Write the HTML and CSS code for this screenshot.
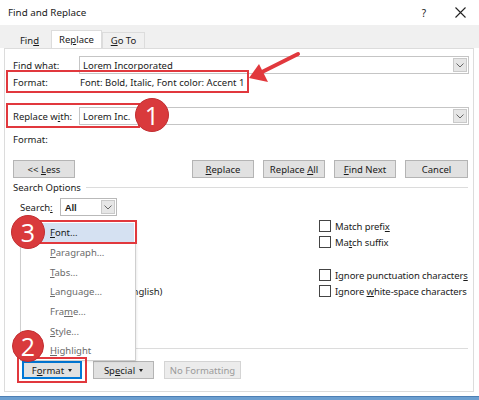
FILE: index.html
```html
<!DOCTYPE html>
<html>
<head>
<meta charset="utf-8">
<link rel="stylesheet" href="styles.css">
</head>
<body>
<div class="dialog">
  <div class="titlebar">
    <span class="title">Find and Replace</span>
    <span class="help">?</span>
    <svg class="close" width="11" height="11" viewBox="0 0 11 11"><path d="M0.5 0.5L10.5 10.5M10.5 0.5L0.5 10.5" stroke="#222" stroke-width="1.1"/></svg>
  </div>
  <div class="tabs">
    <span class="tab"><span>Fin<u>d</u></span></span>
    <span class="tab active"><span>Re<u>p</u>lace</span></span>
    <span class="tab"><span><u>G</u>o To</span></span>
  </div>
  <div class="panel">
    <div class="row r-find">
      <span class="label">Fi<u>n</u>d what:</span>
      <div class="combo"><span class="combo-text">Lorem Incorporated</span><span class="drop"><svg width="8" height="5" viewBox="0 0 8 5"><path d="M0.5 0.5L4 4L7.5 0.5" fill="none" stroke="#666" stroke-width="1"/></svg></span></div>
    </div>
    <div class="row r-fmt">
      <span class="label">Format:</span>
      <span class="fmt-text">Font: Bold, Italic, Font color: Accent 1</span>
    </div>
    <div class="row r-repl">
      <span class="label">Replace w<u>i</u>th:</span>
      <div class="combo"><span class="combo-text">Lorem Inc.</span><span class="drop"><svg width="8" height="5" viewBox="0 0 8 5"><path d="M0.5 0.5L4 4L7.5 0.5" fill="none" stroke="#666" stroke-width="1"/></svg></span></div>
    </div>
    <div class="row r-fmt2">
      <span class="label">Format:</span>
    </div>
    <div class="btn-row">
      <span class="btn"><span>&lt;&lt; <u>L</u>ess</span></span>
      <div class="btn-group">
        <span class="btn"><span><u>R</u>eplace</span></span>
        <span class="btn"><span>Replace <u>A</u>ll</span></span>
        <span class="btn"><span><u>F</u>ind Next</span></span>
        <span class="btn"><span>Cancel</span></span>
      </div>
    </div>
    <div class="group-title"><span>Search Options</span><span class="rule"></span></div>
    <div class="search-row">
      <span class="search-label">Search<u>:</u></span>
      <div class="select"><span class="combo-text">All</span><span class="drop"><svg width="8" height="5" viewBox="0 0 8 5"><path d="M0.5 0.5L4 4L7.5 0.5" fill="none" stroke="#666" stroke-width="1"/></svg></span></div>
    </div>
    <div class="options">
      <div class="col left">
        <label class="opt covered"><span class="box"></span><span>Matc<u>h</u> case</span></label>
        <label class="opt covered"><span class="box"></span><span>Find wh<u>o</u>le words only</span></label>
        <label class="opt covered"><span class="box"></span><span>Use wildcards</span></label>
        <label class="opt covered"><span class="box"></span><span>Sounds li<u>k</u>e (English)</span></label>
        <label class="opt"><span class="box"></span><span>Find all <u>w</u>ord forms (English)</span></label>
      </div>
      <div class="col right">
        <label class="opt"><span class="box"></span><span>Match prefi<u>x</u></span></label>
        <label class="opt"><span class="box"></span><span>Ma<u>t</u>ch suffix</span></label>
        <span class="opt"></span>
        <label class="opt"><span class="box"></span><span>Ignore punctuation character<u>s</u></span></label>
        <label class="opt"><span class="box"></span><span>Ignore <u>w</u>hite-space characters</span></label>
      </div>
    </div>
    <div class="group-title g-replace"><span class="covered">Replace</span><span class="rule"></span></div>
    <div class="bottom-row">
      <span class="btn fmt-btn"><span>F<u>o</u>rmat</span><i class="caret"></i></span>
      <span class="btn sp-btn"><span>Sp<u>e</u>cial</span><i class="caret"></i></span>
      <span class="btn disabled"><span>No Formatting</span></span>
    </div>
  </div>
  <div class="taskbar"></div>

  <div class="menu">
    <div class="item hl"><span><u>F</u>ont...</span></div>
    <div class="item"><span><u>P</u>aragraph...</span></div>
    <div class="item"><span><u>T</u>abs...</span></div>
    <div class="item"><span><u>L</u>anguage...</span></div>
    <div class="item"><span>Fra<u>m</u>e...</span></div>
    <div class="item"><span><u>S</u>tyle...</span></div>
    <div class="item"><span><u>H</u>ighlight</span></div>
  </div>

  <div class="redbox rb-fmt"></div>
  <div class="redbox rb-repl"></div>
  <div class="redbox rb-font"></div>
  <div class="redbox rb-fbtn"></div>

  <svg class="arrow" width="479" height="100" viewBox="0 0 479 100">
    <line x1="298" y1="54" x2="262" y2="72" stroke="#e1383d" stroke-width="4" stroke-linecap="round"/>
    <polygon points="249,78 259,64 268,82" fill="#e1383d"/>
  </svg>

  <div class="badge b1">1</div>
  <div class="badge b3">3</div>
  <div class="badge b2">2</div>
</div>
</body>
</html>
```

FILE: styles.css
```css
* { box-sizing: border-box; }
body {
  margin: 0;
  font-family: "Noto Sans", "Open Sans", sans-serif;
  font-size: 9.5px;
  color: #1a1a1a;
  background: #fff;
}
u { text-decoration: underline; text-underline-offset: 1px; }
.dialog {
  position: relative;
  width: 479px;
  height: 400px;
  overflow: hidden;
  background: #fff;
}
.titlebar {
  height: 25px;
  display: flex;
  align-items: center;
  padding: 0 13px 0 8px;
  font-size: 9.8px;
}
.title { flex: 1; }
.help { margin-right: 29px; font-size: 10px; }
.close { display: block; }
.tabs {
  height: 23px;
  background: #f0f0f0;
  display: flex;
  align-items: flex-end;
  padding-left: 8px;
}
.tab {
  height: 16px;
  width: 43px;
  display: flex;
  align-items: center;
  justify-content: center;
  border: 1px solid #dcdcdc;
  border-bottom: none;
  background: #f0f0f0;
}
.tab:first-child { border-color: transparent; }
.tab.active {
  width: 51px;
  height: 18px;
  background: #fff;
  border-color: #dcdcdc;
}
.panel {
  margin: 0 5px 0 4px;
  height: 344px;
  border: 1px solid #dcdcdc;
  padding: 7px 4px 0 8px;
}
.row { display: flex; align-items: center; }
.label { width: 66px; flex: none; }
.r-find, .r-repl { height: 18px; }
.r-fmt { height: 17px; }
.fmt-text { padding-left: 1px; }
.r-repl { margin-top: 16px; }
.r-fmt2 { height: 17px; margin-top: 6px; }
.combo {
  flex: 1;
  height: 18px;
  border: 1px solid #c5c5c5;
  display: flex;
  align-items: center;
  padding-left: 3px;
}
.combo-text { flex: 1; }
.drop {
  width: 14px;
  height: 14px;
  margin-right: 1px;
  background: #e6e6e6;
  border: 1px solid #c9c9c9;
  display: flex;
  align-items: center;
  justify-content: center;
}
.btn-row {
  margin-top: 12px;
  height: 18px;
  display: flex;
  padding-right: 1px;
}
.btn {
  width: 62px;
  height: 18px;
  background: #e1e1e1;
  border: 1px solid #b4b4b4;
  display: flex;
  align-items: center;
  justify-content: center;
  white-space: nowrap;
}
.btn-group { margin-left: auto; display: flex; gap: 9px; }
.btn-group .btn:last-child { width: 63px; }
.group-title {
  margin-top: 2px;
  height: 14px;
  display: flex;
  align-items: center;
  padding-right: 1px;
}
.group-title .rule {
  flex: 1;
  height: 1px;
  background: #dcdcdc;
  margin-left: 5px;
}
.search-row {
  margin-top: 4px;
  height: 18px;
  display: flex;
  align-items: center;
  padding-left: 7px;
}
.search-label { width: 40px; }
.select {
  width: 57px;
  height: 18px;
  border: 1px solid #b9b9b9;
  display: flex;
  align-items: center;
  padding-left: 4px;
  font-weight: 600;
}
.options {
  display: flex;
  padding-left: 7px;
  margin-top: 2px;
}
.col { display: flex; flex-direction: column; flex: none; }
.col.left { width: 299px; }
.col.right { letter-spacing: -0.1px; }
.opt {
  height: 16.3px;
  display: flex;
  align-items: center;
  white-space: nowrap;
}
.covered { visibility: hidden; }
.box {
  width: 12px;
  height: 12px;
  border: 1px solid #444;
  background: #fff;
  margin-right: 4px;
  flex: none;
}
.g-replace { margin-top: 42px; }
.bottom-row {
  margin-top: 6px;
  display: flex;
  padding-left: 9px;
}
.fmt-btn { width: 60px; border: 1px solid #0078d7; box-shadow: inset 0 0 0 1px #0078d7; }
.sp-btn { width: 61px; margin-left: 11px; }
.disabled {
  width: 77px;
  margin-left: 10px;
  background: #ececec;
  border-color: #d4d4d4;
  color: #9a9a9a;
}
.caret {
  display: inline-block;
  width: 0;
  height: 0;
  border-left: 2.5px solid transparent;
  border-right: 2.5px solid transparent;
  border-top: 3px solid #222;
  margin-left: 4px;
  margin-top: 1px;
}
.taskbar {
  position: absolute;
  left: 0;
  right: 0;
  bottom: 0;
  height: 4px;
  background: #6c9fd0;
  border-top: 1px solid #4d7fb4;
}
.menu {
  position: absolute;
  left: 20px;
  top: 221px;
  width: 116px;
  height: 140px;
  background: #fff;
  border: 1px solid #cfcfcf;
  padding: 1px;
  box-shadow: 1px 1px 2px rgba(0,0,0,0.08);
}
.item {
  height: 19.7px;
  display: flex;
  align-items: center;
  padding-left: 28px;
  color: #6a6a6a;
}
.item.hl { background: #d5e1f2; color: #1a1a1a; }
.redbox {
  position: absolute;
  border: 2px solid #e1383d;
}
.rb-fmt { left: 6px; top: 70px; width: 243px; height: 23px; }
.rb-repl { left: 6px; top: 103px; width: 134px; height: 25px; }
.rb-font { left: 21px; top: 220px; width: 116px; height: 24px; }
.rb-fbtn { left: 17px; top: 357px; width: 70px; height: 26px; }
.arrow { position: absolute; left: 0; top: 0; }
.badge {
  position: absolute;
  width: 34px;
  height: 34px;
  border-radius: 50%;
  background: #d93a3c;
  border: 1px solid #c22e31;
  color: #fff;
  font-family: "Open Sans", "Noto Sans", sans-serif;
  font-size: 25px;
  line-height: 32px;
  text-align: center;
}
.b1 { left: 135px; top: 98px; }
.b3 { left: 11px; top: 215px; }
.b2 { left: 12px; top: 330px; width: 32px; height: 32px; line-height: 30px; }
```
